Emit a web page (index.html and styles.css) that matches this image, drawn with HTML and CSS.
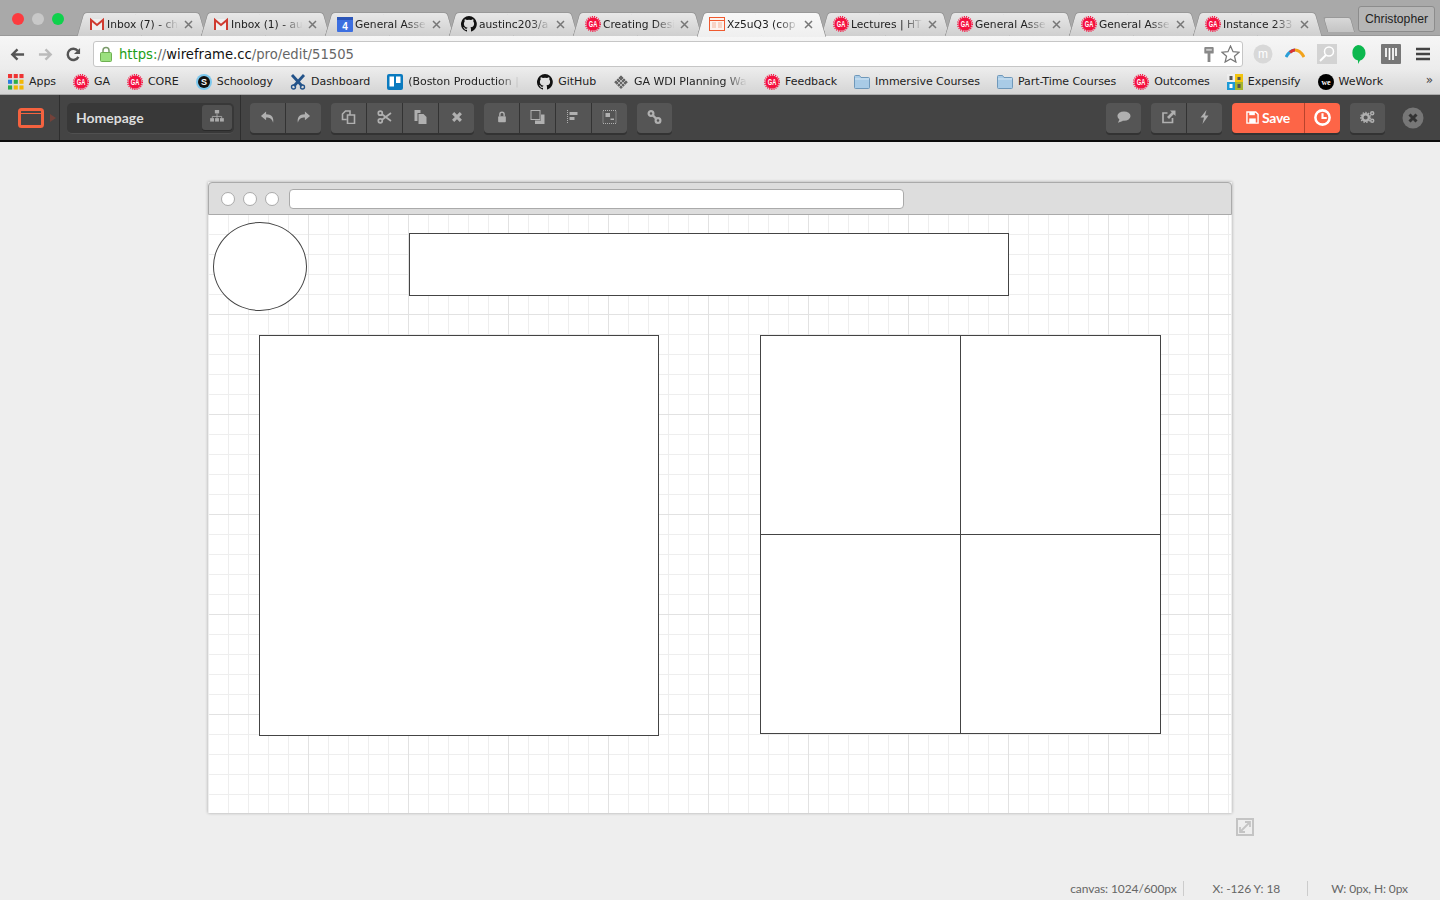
FILE: index.html
```html
<!DOCTYPE html>
<html lang="en">
<head>
  <meta charset="UTF-8" />
  <title>Xz5uQ3 (copy) - Wireframe.cc</title>
  <link rel="stylesheet" href="styles.css">
</head>
<body>
  <svg class="defs" xmlns="http://www.w3.org/2000/svg">
    <symbol id="ga" viewBox="0 0 16 16">
      <circle cx="8" cy="8" r="6.600" fill="#f5103f"/>
      <circle cx="8" cy="8" r="7.300" fill="none" stroke="#f5103f" stroke-width="1.400" stroke-dasharray="1.100 1.100"/>
      <text x="8" y="11.200" text-anchor="middle" font-family="Liberation Sans" font-weight="700" font-size="8.500" textLength="8.500" lengthAdjust="spacingAndGlyphs" fill="#fff">GA</text>
    </symbol>
    <symbol id="gmail" viewBox="0 0 16 16">
      <rect x="1" y="3" width="14" height="11" fill="#eee"/>
      <path d="M2 14V4l6 5 6-5v10" fill="none" stroke="#cf3a2f" stroke-width="2"/>
    </symbol>
    <symbol id="github" viewBox="0 0 16 16">
      <path d="M8 0a8 8 0 0 0-2.500 15.600c.4.1.5-.2.5-.4v-1.400c-2.200.5-2.700-1-2.700-1-.4-.9-.9-1.200-.9-1.200-.7-.5.1-.5.1-.5.8.1 1.200.8 1.200.8.7 1.200 1.900.9 2.300.7.1-.5.3-.9.5-1.100-1.800-.2-3.600-.9-3.600-4 0-.9.3-1.600.8-2.100-.1-.2-.4-1 .1-2.100 0 0 .7-.2 2.200.8a7.600 7.600 0 0 1 4 0c1.500-1 2.200-.8 2.200-.8.4 1.100.2 1.900.1 2.100.5.6.8 1.300.8 2.100 0 3.100-1.900 3.700-3.700 3.900.3.3.6.8.6 1.500v2.200c0 .2.1.5.6.4A8 8 0 0 0 8 0z" fill="#111"/>
    </symbol>
    <symbol id="folder" viewBox="0 0 16 14">
      <path d="M.5 3V1.500q0-1 1-1h4l1.500 2h7.500q1 0 1 1v9q0 1-1 1h-13q-1 0-1-1z" fill="#a9cbe6" stroke="#6f98ba"/>
      <path d="M1 4h14" stroke="#d6e8f5"/>
    </symbol>
    <symbol id="close" viewBox="0 0 9 9">
      <path d="M1 1l7 7M8 1L1 8" stroke="#777" stroke-width="1.500" fill="none"/>
    </symbol>
  </svg>

  <div class="tabstrip">
    <div class="lights"><i class="light red"></i><i class="light grey"></i><i class="light green"></i></div>
    <div class="tab"><svg class="fav"><use href="#gmail"/></svg><span class="title">Inbox (7) - ch</span><svg class="x"><use href="#close"/></svg></div>
    <div class="tab"><svg class="fav"><use href="#gmail"/></svg><span class="title">Inbox (1) - au</span><svg class="x"><use href="#close"/></svg></div>
    <div class="tab">
      <svg class="fav" viewBox="0 0 16 16"><rect y="1" width="16" height="15" rx="1" fill="#3d6fe0"/><rect y="1" width="16" height="3" fill="#2b55b8"/><text x="8" y="14" text-anchor="middle" font-family="Liberation Sans" font-weight="700" font-size="10" fill="#fff">4</text></svg>
      <span class="title">General Asse</span><svg class="x"><use href="#close"/></svg>
    </div>
    <div class="tab"><svg class="fav"><use href="#github"/></svg><span class="title">austinc203/a</span><svg class="x"><use href="#close"/></svg></div>
    <div class="tab"><svg class="fav"><use href="#ga"/></svg><span class="title">Creating Desi</span><svg class="x"><use href="#close"/></svg></div>
    <div class="tab active">
      <svg class="fav" viewBox="0 0 16 14"><rect x=".5" y=".5" width="15" height="13" fill="#fdf3ee" stroke="#ef5a2f"/><path d="M1 3.500h14" stroke="#ef5a2f"/><path d="M3 6h4M3 8h4M3 10h4M9 6h4M9 8h4M9 10h4" stroke="#f3b49c"/></svg>
      <span class="title">Xz5uQ3 (cop</span><svg class="x"><use href="#close"/></svg>
    </div>
    <div class="tab"><svg class="fav"><use href="#ga"/></svg><span class="title">Lectures | HT</span><svg class="x"><use href="#close"/></svg></div>
    <div class="tab"><svg class="fav"><use href="#ga"/></svg><span class="title">General Asse</span><svg class="x"><use href="#close"/></svg></div>
    <div class="tab"><svg class="fav"><use href="#ga"/></svg><span class="title">General Asse</span><svg class="x"><use href="#close"/></svg></div>
    <div class="tab"><svg class="fav"><use href="#ga"/></svg><span class="title">Instance 233</span><svg class="x"><use href="#close"/></svg></div>
    <div class="newtab"></div>
    <div class="profile">Christopher</div>
  </div>

  <div class="navbar">
    <svg class="nav-ico" viewBox="0 0 16 14"><path d="M15 7H3M8 1.500L2.500 7 8 12.500" fill="none" stroke="#555" stroke-width="2.600"/></svg>
    <svg class="nav-ico" viewBox="0 0 16 14"><path d="M1 7h12M8 1.500L13.500 7 8 12.500" fill="none" stroke="#bbb" stroke-width="2.600"/></svg>
    <svg class="nav-ico" viewBox="0 0 16 16"><path d="M13.200 10.500A6 6 0 1 1 12.500 4" fill="none" stroke="#555" stroke-width="2.600"/><path d="M15 1v6.500H8.500z" fill="#555"/></svg>
    <div class="omnibox">
      <svg class="lock" viewBox="0 0 12 16"><path d="M3 7V4.500a3 3 0 0 1 6 0V7" fill="none" stroke="#7a9a6a" stroke-width="1.500"/><rect x=".5" y="6.500" width="11" height="9" rx="1" fill="#9be07f" stroke="#6fb052"/></svg>
      <div class="url"><span class="url-green">https:</span><span class="url-grey">//</span><span class="url-host">wireframe.cc</span><span class="url-grey">/pro/edit/51505</span></div>
      <svg class="key" viewBox="0 0 10 16"><path d="M0 1q0-1 1-1h8q1 0 1 1v5q0 1-1 1H6.500v9h-3V7H1Q0 7 0 6z" fill="#888"/><rect x="2" y="2" width="6" height="2" fill="#ccc"/></svg>
      <svg class="star" viewBox="0 0 20 19"><path d="M10 1l2.700 6 6.300.6-4.800 4.200 1.500 6.200L10 14.700 4.300 18l1.500-6.200L1 7.600 7.300 7z" fill="#fff" stroke="#777" stroke-width="1.300"/></svg>
    </div>
    <div class="extensions">
      <svg class="ext" viewBox="0 0 20 20"><circle cx="10" cy="10" r="9.500" fill="#d8d8d8"/><text x="10" y="14" text-anchor="middle" font-family="Liberation Sans" font-size="12" fill="#fff">m</text></svg>
      <svg class="ext" viewBox="0 0 20 20"><path d="M1 13Q5 6 10 6" fill="none" stroke="#2a9fd8" stroke-width="3"/><path d="M5 8.500Q7.500 6 10 6" fill="none" stroke="#d33" stroke-width="3"/><path d="M10 6Q15 6 19 13" fill="none" stroke="#f2a31b" stroke-width="3"/></svg>
      <svg class="ext" viewBox="0 0 20 20"><rect width="20" height="20" fill="#d3d3d3"/><circle cx="12" cy="7.500" r="4.500" fill="none" stroke="#fff" stroke-width="1.500"/><path d="M9 11l-6 6" stroke="#fff" stroke-width="2"/></svg>
      <svg class="ext" viewBox="0 0 20 20"><path d="M9 1a7.500 8 0 0 1 7.500 8c0 4-3 7-5.500 7.500L9 20v-3.500a7.500 8 0 0 1 0-15.500z" fill="#0cb84e"/></svg>
      <svg class="ext" viewBox="0 0 20 20"><rect width="20" height="20" rx="1" fill="#777"/><path d="M5 4v9M8.500 4v12M12 4v12M15 4v8" stroke="#fff" stroke-width="1.700"/></svg>
      <svg class="ext menu" viewBox="0 0 14 14"><path d="M0 2h14M0 7h14M0 12h14" stroke="#444" stroke-width="2.400"/></svg>
    </div>
  </div>

  <div class="bookmarks">
    <a class="bm">
      <svg class="bm-ico" viewBox="0 0 14 14"><rect width="3.600" height="3.600" fill="#e33"/><rect x="5" width="3.600" height="3.600" fill="#e33"/><rect x="10" width="3.600" height="3.600" fill="#e33"/><rect y="5" width="3.600" height="3.600" fill="#2a7de1"/><rect x="5" y="5" width="3.600" height="3.600" fill="#2bae4a"/><rect x="10" y="5" width="3.600" height="3.600" fill="#f2b705"/><rect y="10" width="3.600" height="3.600" fill="#2bae4a"/><rect x="5" y="10" width="3.600" height="3.600" fill="#f2b705"/><rect x="10" y="10" width="3.600" height="3.600" fill="#f2b705"/></svg>
      Apps
    </a>
    <a class="bm"><svg class="bm-ico"><use href="#ga"/></svg>GA</a>
    <a class="bm"><svg class="bm-ico"><use href="#ga"/></svg>CORE</a>
    <a class="bm">
      <svg class="bm-ico" viewBox="0 0 16 16"><circle cx="8" cy="8" r="8" fill="#7cc8ee"/><circle cx="8" cy="8" r="6" fill="#111"/><text x="8" y="11" text-anchor="middle" font-family="Liberation Sans" font-weight="700" font-size="9" fill="#fff">S</text></svg>
      Schoology
    </a>
    <a class="bm">
      <svg class="bm-ico" viewBox="0 0 16 16"><path d="M2 1l10 11M14 1L4 12" stroke="#23538a" stroke-width="2.800"/><circle cx="3.500" cy="13" r="2" fill="none" stroke="#23538a" stroke-width="1.400"/><circle cx="12.500" cy="13" r="2" fill="none" stroke="#23538a" stroke-width="1.400"/></svg>
      Dashboard
    </a>
    <a class="bm">
      <svg class="bm-ico" viewBox="0 0 16 16"><rect width="16" height="16" rx="2" fill="#0a7abf"/><rect x="2.500" y="2.500" width="4.500" height="10" fill="#fff"/><rect x="9" y="2.500" width="4.500" height="6.500" fill="#fff"/></svg>
      <span class="bm-fade boston">(Boston Production |</span>
    </a>
    <a class="bm"><svg class="bm-ico"><use href="#github"/></svg>GitHub</a>
    <a class="bm">
      <svg class="bm-ico" viewBox="0 0 16 16"><path d="M8 1l7 7-7 7-7-7z" fill="#666"/><path d="M5 4l7 7M8 1l7 7M3 6l7 7M11 4l-7 7M8 1L1 8M13 6l-7 7" stroke="#ddd" stroke-width=".7"/></svg>
      <span class="bm-fade wdi">GA WDI Planning Wa</span>
    </a>
    <a class="bm"><svg class="bm-ico"><use href="#ga"/></svg>Feedback</a>
    <a class="bm"><svg class="bm-ico"><use href="#folder"/></svg>Immersive Courses</a>
    <a class="bm"><svg class="bm-ico"><use href="#folder"/></svg>Part-Time Courses</a>
    <a class="bm"><svg class="bm-ico"><use href="#ga"/></svg>Outcomes</a>
    <a class="bm">
      <svg class="bm-ico" viewBox="0 0 16 16"><rect width="8" height="8" fill="#eee"/><rect x="8" width="8" height="8" fill="#f2c40f"/><rect y="8" width="8" height="8" fill="#1c9ad6"/><rect x="8" y="8" width="8" height="8" fill="#a5b52c"/><rect x="2.500" y="2" width="3" height="4" fill="#555"/><rect x="10.500" y="3" width="3" height="3" fill="#555"/><rect x="2.500" y="10" width="3" height="4" fill="#fff"/><rect x="10.500" y="10" width="3" height="4" fill="#555"/></svg>
      Expensify
    </a>
    <a class="bm">
      <svg class="bm-ico" viewBox="0 0 16 16"><circle cx="8" cy="8" r="8" fill="#000"/><text x="8" y="10.500" text-anchor="middle" font-family="Liberation Serif" font-weight="700" font-size="8" fill="#fff">we</text></svg>
      WeWork
    </a>
    <span class="bm-more">»</span>
  </div>

  <div class="toolbar">
    <div class="logo-cell">
      <svg class="logo" viewBox="0 0 26 20"><rect x="1.500" y="1.500" width="23" height="17" rx="2" fill="none" stroke="#f4623f" stroke-width="3"/><path d="M2 5.500h22" stroke="#f4623f"/></svg>
      <i class="logo-arrow"></i>
    </div>
    <div class="page-cell">
      <div class="page-name">
        <span>Homepage</span>
        <button class="page-tree">
          <svg viewBox="0 0 16 14"><rect x="5.500" y="0" width="5" height="4" fill="#aaa"/><path d="M8 4v3M2.500 10V7.500h11V10M8 7v3" fill="none" stroke="#aaa"/><rect x="0" y="9.500" width="4.500" height="4" fill="#aaa"/><rect x="5.750" y="9.500" width="4.500" height="4" fill="#aaa"/><rect x="11.500" y="9.500" width="4.500" height="4" fill="#aaa"/></svg>
        </button>
      </div>
    </div>
    <div class="tools">
      <div class="group">
        <button><svg viewBox="0 0 16 14"><path d="M6.500 1L1 5.800l5.500 4.700V7.600c4 0 6 1.200 7.500 5.400 1-5.500-1.500-9-7.500-9z" fill="#b0b0b0"/></svg></button>
        <button><svg viewBox="0 0 16 14"><path d="M9.500 1L15 5.800l-5.500 4.700V7.600c-4 0-6 1.200-7.500 5.400-1-5.500 1.500-9 7.500-9z" fill="#b0b0b0"/></svg></button>
      </div>
      <div class="group">
        <button><svg viewBox="0 0 14 14"><path d="M5 9.500H1V4l3-3h4.500v3.500M6 5h7v8.500H6z" fill="none" stroke="#b0b0b0" stroke-width="1.600"/></svg></button>
        <button><svg viewBox="0 0 14 14"><circle cx="2.800" cy="3.200" r="2" fill="none" stroke="#b0b0b0" stroke-width="1.700"/><circle cx="2.800" cy="10.800" r="2" fill="none" stroke="#b0b0b0" stroke-width="1.700"/><path d="M4.500 4.200L13.500 11M4.500 9.800L13.500 3" stroke="#b0b0b0" stroke-width="1.700"/></svg></button>
        <button><svg viewBox="0 0 14 14"><path d="M1 0h6v3H4v8H1z" fill="#b0b0b0"/><path d="M5 4h5l3 3v7H5z" fill="#b0b0b0"/></svg></button>
        <button><svg viewBox="0 0 14 14" class="small"><path d="M2.500 2.500l9 9M11.500 2.500l-9 9" stroke="#b0b0b0" stroke-width="3.600"/></svg></button>
      </div>
      <div class="group">
        <button><svg viewBox="0 0 14 14" class="small"><path d="M4.500 6V4a2.500 2.500 0 0 1 5 0v2" fill="none" stroke="#b0b0b0" stroke-width="1.600"/><rect x="2.500" y="6" width="9" height="7" rx="1" fill="#b0b0b0"/></svg></button>
        <button><svg viewBox="0 0 14 14"><rect x=".5" y=".5" width="9" height="9" fill="none" stroke="#b0b0b0"/><path d="M10.500 4.500H14V14H4.500v-3.500h6z" fill="#b0b0b0"/></svg></button>
        <button><svg viewBox="0 0 14 14"><path d="M1 0v14" stroke="#b0b0b0" stroke-dasharray="1 1"/><rect x="3" y="2" width="8" height="3" fill="#b0b0b0"/><rect x="3" y="7" width="5" height="3" fill="#b0b0b0"/></svg></button>
        <button><svg viewBox="0 0 14 14"><rect x=".5" y=".5" width="13" height="13" fill="none" stroke="#b0b0b0" stroke-dasharray="1 1"/><rect x="3" y="3" width="4.500" height="4" fill="#b0b0b0"/><rect x="8" y="8.500" width="3.500" height="1.500" fill="#b0b0b0"/></svg></button>
      </div>
      <div class="group">
        <button><svg viewBox="0 0 14 14"><circle cx="3.500" cy="3.500" r="2.400" fill="none" stroke="#b0b0b0" stroke-width="2.200"/><circle cx="10.500" cy="10.500" r="2.400" fill="none" stroke="#b0b0b0" stroke-width="2.200"/><path d="M5 5l4 4" stroke="#b0b0b0" stroke-width="2.400"/></svg></button>
      </div>
    </div>
    <div class="tools tools-right">
      <div class="group">
        <button><svg viewBox="0 0 16 14"><ellipse cx="8.500" cy="6" rx="7" ry="5" fill="#b0b0b0"/><path d="M4 9L2 13l6-2z" fill="#b0b0b0"/></svg></button>
      </div>
      <div class="group">
        <button><svg viewBox="0 0 14 14"><path d="M11 8v4.500H1.500V3H6" fill="none" stroke="#b0b0b0" stroke-width="1.700"/><path d="M8.500 0.500H14V6l-1.800-1.800L7.500 9 5.500 7l4.800-4.700z" fill="#b0b0b0"/></svg></button>
        <button><svg viewBox="0 0 10 14"><path d="M7 0L1 7.500H4.500L3 14 9 5.500H5.500z" fill="#b0b0b0"/></svg></button>
      </div>
      <div class="group group-save">
        <button class="save">
          <svg viewBox="0 0 14 14"><path d="M1 1h9.500L13 3.500V13H1z" fill="none" stroke="#fff" stroke-width="1.500"/><rect x="3.500" y="1" width="6" height="3.500" fill="#fff"/><rect x="3.500" y="8" width="7" height="5" fill="#fff"/></svg>
          Save
        </button>
        <button class="clock"><svg viewBox="0 0 16 16"><circle cx="8" cy="8" r="6.700" fill="none" stroke="#fff" stroke-width="2.400"/><path d="M8 4v4.500h4" fill="none" stroke="#fff" stroke-width="2"/></svg></button>
      </div>
      <div class="group">
        <button><svg viewBox="0 0 16 14"><circle cx="6" cy="7.500" r="3.500" fill="none" stroke="#b0b0b0" stroke-width="2.600"/><circle cx="6" cy="7.500" r="5.300" fill="none" stroke="#b0b0b0" stroke-width="1.400" stroke-dasharray="1.500 1.500"/><circle cx="13" cy="3" r="1.600" fill="none" stroke="#b0b0b0" stroke-width="1.600"/><circle cx="13" cy="11" r="1.600" fill="none" stroke="#b0b0b0" stroke-width="1.600"/></svg></button>
      </div>
      <svg class="dismiss" viewBox="0 0 22 22"><circle cx="11" cy="11" r="10.500" fill="#777"/><path d="M7.500 7.500l7 7M14.500 7.500l-7 7" stroke="#333" stroke-width="3"/></svg>
    </div>
  </div>

  <main class="stage">
    <div class="canvas">
      <div class="mock-chrome">
        <i class="dot"></i><i class="dot"></i><i class="dot"></i>
        <div class="mock-url"></div>
      </div>
      <div class="board">
        <div class="shape circle"></div>
        <div class="shape banner"></div>
        <div class="shape big"></div>
        <div class="shape q1"></div>
        <div class="shape q2"></div>
        <div class="shape q3"></div>
        <div class="shape q4"></div>
      </div>
      <svg class="resize" viewBox="0 0 18 18"><rect x="1" y="1" width="16" height="16" fill="none" stroke="#c4c4c4" stroke-width="2"/><path d="M4 14l10-10M9 4h5v5M4 9v5h5" fill="none" stroke="#c4c4c4" stroke-width="1.800"/></svg>
    </div>
    <div class="status">
      <span class="stat stat-canvas">canvas: 1024/600px</span>
      <span class="stat stat-pos">X: -126 Y: 18</span>
      <span class="stat stat-size">W: 0px, H: 0px</span>
    </div>
  </main>
</body>
</html>
```

FILE: styles.css
```css
* {
  box-sizing: border-box;
}
html, body {
  height: 100%;
}
body {
  margin: 0;
  height: 900px;
  overflow: hidden;
  display: flex;
  flex-direction: column;
  background-color: #eee;
  font-family: "DejaVu Sans", sans-serif;
  color: #222;
}
.defs {
  display: none;
}

/* browser tabs */
.tabstrip {
  height: 36px;
  flex: none;
  display: flex;
  position: relative;
  padding-top: 12px;
  background-color: #a9a9a9;
  border-bottom: 1px solid #999;
}
.lights {
  width: 78px;
  flex: none;
  display: flex;
  gap: 8px;
  padding: 1px 0 0 12px;
}
.light {
  width: 12px;
  height: 12px;
  border-radius: 50%;
}
.red { background-color: #fc3b3f; }
.grey { background-color: #c8c8c8; }
.green { background-color: #0fd14c; }
.tab {
  width: 124px;
  height: 24px;
  flex: none;
  display: flex;
  align-items: center;
  position: relative;
  isolation: isolate;
  padding-left: 11px;
  font-size: 10.700px;
  color: #222;
}
.tab::before, .tab::after {
  content: "";
  position: absolute;
  z-index: -1;
  top: 0;
  bottom: 0;
  width: 64px;
  background: linear-gradient(#e8e8e8, #cfcfcf);
  border-top: 1px solid #999;
}
.tab::before {
  left: 2px;
  transform: skewX(-16deg);
  border-left: 1px solid #999;
  border-top-left-radius: 4px;
}
.tab::after {
  right: -1px;
  transform: skewX(16deg);
  border-right: 1px solid #999;
  border-top-right-radius: 4px;
}
.tab.active {
  z-index: 2;
}
.tab.active::before, .tab.active::after {
  background: linear-gradient(#f8f8f8, #efefef);
  bottom: -1px;
}
.fav {
  width: 16px;
  height: 16px;
  flex: none;
}
.title {
  width: 73px;
  flex: none;
  margin-left: 2px;
  overflow: hidden;
  white-space: nowrap;
  -webkit-mask-image: linear-gradient(to right, #000 70%, transparent 98%);
  mask-image: linear-gradient(to right, #000 70%, transparent 98%);
}
.x {
  width: 9px;
  height: 9px;
  flex: none;
  margin-left: 4px;
}
.newtab {
  width: 28px;
  height: 15px;
  flex: none;
  margin: 5px 0 0 7px;
  background: linear-gradient(#d8d8d8, #c4c4c4);
  border: 1px solid #999;
  border-bottom: none;
  border-radius: 3px 3px 0 0;
  transform: skewX(16deg);
}
.profile {
  position: absolute;
  top: 6px;
  right: 5px;
  width: 77px;
  height: 26px;
  line-height: 24px;
  text-align: center;
  font-family: "Liberation Sans", sans-serif;
  font-size: 12.200px;
  background-color: #b6b6b6;
  border: 1px solid #8c8c8c;
  border-radius: 3px;
}

/* address bar */
.navbar {
  height: 33px;
  flex: none;
  display: flex;
  align-items: center;
  gap: 13px;
  padding: 3px 0 0 10px;
  background: linear-gradient(#f6f6f6, #ececec);
}
.nav-ico {
  width: 15px;
  height: 15px;
  flex: none;
}
.omnibox {
  width: 1150px;
  height: 26px;
  flex: none;
  display: flex;
  align-items: center;
  margin-left: -1px;
  padding: 0 2px 0 6px;
  background-color: #fff;
  border: 1px solid #c6c6c6;
  border-radius: 3px;
}
.lock {
  width: 12px;
  height: 16px;
  flex: none;
}
.url {
  flex: 1;
  margin-left: 7px;
  font-size: 13.200px;
  white-space: nowrap;
}
.url-green { color: #1e9e18; }
.url-grey { color: #666; }
.url-host { color: #111; }
.key {
  width: 10px;
  height: 15px;
  flex: none;
}
.star {
  width: 19px;
  height: 18px;
  flex: none;
  margin-left: 7px;
}
.extensions {
  display: flex;
  align-items: center;
  gap: 12px;
  margin-left: -3px;
}
.ext {
  width: 20px;
  height: 20px;
  flex: none;
}
.ext.menu {
  width: 14px;
  height: 14px;
  margin-left: 3px;
}

/* bookmarks */
.bookmarks {
  height: 26px;
  flex: none;
  display: flex;
  align-items: center;
  gap: 17px;
  position: relative;
  padding-left: 8px;
  font-size: 11px;
  letter-spacing: -0.05px;
  background: linear-gradient(#ececec, #d4d4d4);
  border-bottom: 1px solid #aaa;
}
.bm {
  display: flex;
  align-items: center;
  gap: 5px;
  white-space: nowrap;
}
.bm-ico {
  width: 16px;
  height: 16px;
  flex: none;
}
.bm-fade {
  overflow: hidden;
  -webkit-mask-image: linear-gradient(to right, #000 80%, transparent);
  mask-image: linear-gradient(to right, #000 80%, transparent);
}
.boston { width: 112px; }
.wdi { width: 113px; }
.bm-more {
  position: absolute;
  right: 7px;
  top: 4px;
  font-size: 12px;
  color: #444;
}

/* editor toolbar */
.toolbar {
  height: 47px;
  flex: none;
  display: flex;
  background-color: #444;
  border-bottom: 2px solid #0c0c0c;
}
.logo-cell {
  width: 60px;
  flex: none;
  display: flex;
  align-items: center;
  padding-left: 18px;
  border-right: 1px solid #2e2e2e;
}
.logo {
  width: 26px;
  height: 20px;
  flex: none;
}
.logo-arrow {
  margin-left: 6px;
  border-left: 6px solid #74423a;
  border-top: 4px solid transparent;
  border-bottom: 4px solid transparent;
}
.page-cell {
  width: 181px;
  flex: none;
  padding: 8px 0 0 7px;
  border-right: 1px solid #2e2e2e;
}
.page-name {
  width: 167px;
  height: 31px;
  display: flex;
  align-items: center;
  justify-content: space-between;
  padding: 0 2px 1px 9px;
  background-color: #383838;
  border-bottom: 1px solid #505050;
  border-radius: 5px;
  font-family: Lato, sans-serif;
  font-weight: 700;
  font-size: 14px;
  color: #ddd;
}
.page-tree {
  width: 30px;
  height: 25px;
  padding: 0;
  background-color: #505050;
  border: none;
  border-radius: 3px;
  box-shadow: 0 1px 0 #2a2a2a;
}
.page-tree svg {
  width: 14px;
  height: 12px;
}
.tools {
  display: flex;
  gap: 10px;
  padding: 8px 0 0 9px;
}
.tools-right {
  margin-left: auto;
  padding: 8px 16px 0 0;
}
.group {
  height: 30px;
  display: flex;
  background-color: #555;
  border-radius: 4px;
  box-shadow: 0 2px 0 #333;
  overflow: hidden;
}
.group button {
  width: 36px;
  height: 30px;
  flex: none;
  padding: 0 0 2px;
  background: none;
  border: none;
  border-left: 1px solid #333;
  display: flex;
  align-items: center;
  justify-content: center;
}
.group button:first-child {
  border-left: none;
  width: 35px;
}
.group svg {
  width: 15px;
  height: 14px;
}
.group svg.small {
  width: 12px;
  height: 12px;
}
.group-save {
  background-color: #fd6547;
}
.group-save button {
  border-left-color: #b8432c;
}
.group button.save {
  width: 72px;
  gap: 3px;
  font-family: Lato, sans-serif;
  font-weight: 700;
  font-size: 14px;
  letter-spacing: -0.3px;
  color: #fff;
}
.group .save svg {
  width: 13px;
  height: 13px;
}
.group .clock svg {
  width: 17px;
  height: 17px;
}
.dismiss {
  width: 22px;
  height: 22px;
  flex: none;
  margin: 4px 0 0 7px;
}

/* wireframe canvas */
.stage {
  flex: 1;
  display: flex;
  flex-direction: column;
  padding-top: 40px;
}
.canvas {
  width: 1024px;
  height: 631px;
  flex: none;
  margin: 0 auto;
  position: relative;
  display: flex;
  flex-direction: column;
  box-shadow: 0 0 3px rgba(0, 0, 0, 0.3);
}
.mock-chrome {
  height: 33px;
  flex: none;
  display: flex;
  align-items: center;
  gap: 8px;
  padding-left: 12px;
  background-color: #ddd;
  border: 1px solid #aaa;
  border-radius: 4px 4px 0 0;
}
.dot {
  width: 14px;
  height: 14px;
  flex: none;
  background-color: #fff;
  border: 1px solid #aaa;
  border-radius: 50%;
}
.mock-url {
  width: 615px;
  height: 20px;
  margin-left: 2px;
  background-color: #fff;
  border: 1px solid #aaa;
  border-radius: 4px;
}
.board {
  flex: 1;
  position: relative;
  margin: 0 1px;
  background-color: #fff;
  background-image:
    linear-gradient(to right, transparent 99px, #e2e2e2 99px),
    linear-gradient(to bottom, transparent 99px, #e2e2e2 99px),
    linear-gradient(to right, transparent 19px, #eee 19px),
    linear-gradient(to bottom, transparent 19px, #eee 19px);
  background-size: 100px 100px, 100px 100px, 20px 20px, 20px 20px;
}
.shape {
  position: absolute;
  background-color: #fff;
  border: 1px solid #444;
}
.circle { left: 4px; top: 7px; width: 94px; height: 89px; border-radius: 50%; }
.banner { left: 200px; top: 18px; width: 600px; height: 63px; }
.big { left: 50px; top: 120px; width: 400px; height: 401px; }
.q1 { left: 551px; top: 120px; width: 201px; height: 200px; }
.q2 { left: 751px; top: 120px; width: 201px; height: 200px; }
.q3 { left: 551px; top: 319px; width: 201px; height: 200px; }
.q4 { left: 751px; top: 319px; width: 201px; height: 200px; }
.resize {
  position: absolute;
  right: -22px;
  bottom: -23px;
  width: 18px;
  height: 18px;
}

/* status line */
.status {
  margin-top: auto;
  height: 24px;
  display: flex;
  justify-content: flex-end;
  align-items: center;
  padding-right: 32px;
  font-family: Lato, sans-serif;
  font-size: 12px;
  letter-spacing: -0.1px;
  color: #666;
}
.stat {
  height: 15px;
  line-height: 15px;
}
.stat-canvas {
  padding-right: 6px;
  border-right: 1px solid #ccc;
}
.stat-pos {
  padding: 0 27px 0 29px;
  border-right: 1px solid #ccc;
}
.stat-size {
  padding-left: 23px;
}
```
